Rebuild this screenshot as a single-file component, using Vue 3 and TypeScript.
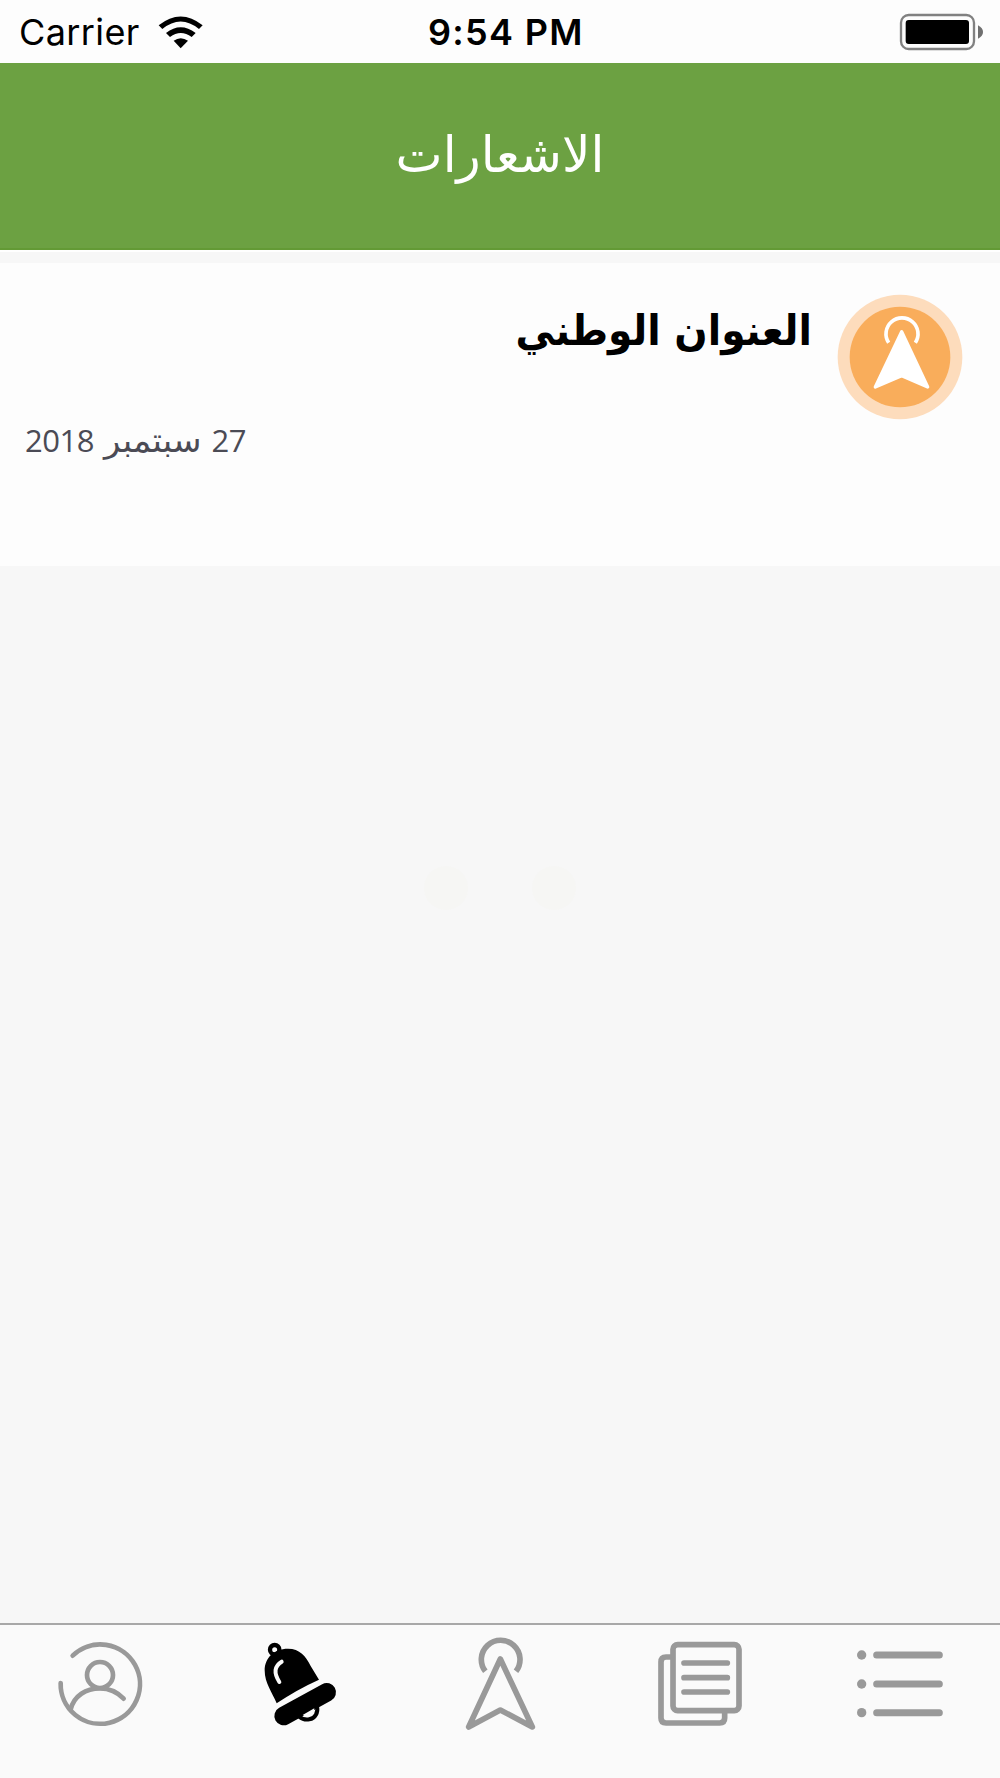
<script setup lang="ts">
const time = '9:54 PM'
const pageTitle = 'الاشعارات'
const notification = { title: 'العنوان الوطني', day: '27', month: 'سبتمبر', year: '2018' }
</script>

<template>
  <div class="screen">
    <div class="status">
      <div class="side">
        <span class="carrier">Carrier</span>
        <svg class="wifi" viewBox="471 42 136 102" width="45.33" height="34">
          <path d="M473 73Q539 20 605 73L594 84Q539 39 484 84Z" />
          <path d="M495 96Q539 62 584 96L572 108Q539 84 507 108Z" />
          <path d="M518 119Q539 104 561 119L539 142Z" />
        </svg>
      </div>
      <span class="time">{{ time }}</span>
      <div class="side end">
        <svg viewBox="117 39 255 114" width="85" height="38">
          <rect x="123" y="45" width="219" height="102" rx="23" fill="none" stroke="#818181" stroke-width="7" />
          <rect x="137" y="60" width="190" height="72" rx="9" />
          <path d="M354 76Q369 84 369 96T354 116Z" fill="#707070" />
        </svg>
      </div>
    </div>

    <header class="header">
      <h1 dir="rtl">{{ pageTitle }}</h1>
    </header>

    <article class="card" dir="rtl">
      <div class="row">
        <svg class="badge" viewBox="1011 41 378 378" width="126" height="126">
          <circle cx="1200" cy="230" r="187" fill="#fddcbc" />
          <circle cx="1200" cy="230" r="151" fill="#f9ad5b" />
          <path d="M1166 187A48 48 0 1 1 1246 187" fill="none" stroke="#fff" stroke-width="11" />
          <path d="M1205 154L1283 320L1205 286L1126 320Z" fill="#fff" stroke="#fff" stroke-width="10" stroke-linejoin="round" />
        </svg>
        <h2>{{ notification.title }}</h2>
      </div>
      <div class="date">
        <span>{{ notification.day }}</span>
        <span class="month">{{ notification.month }}</span>
        <span>{{ notification.year }}</span>
      </div>
    </article>

    <main class="empty">
      <i class="dot"></i>
      <i class="dot"></i>
    </main>

    <nav class="tabs">
      <a class="tab">
        <svg viewBox="30 45 360 360">
          <g class="line thin" stroke-linecap="round">
            <path d="M128 137A119 119 0 1 1 92 219" />
            <circle cx="210" cy="195" r="39" />
            <path d="M122 298C132 257 168 235 210 235C239 235 263 247 281 266" />
          </g>
        </svg>
      </a>
      <a class="tab">
        <svg viewBox="30 45 360 360">
          <circle cx="134" cy="119" r="14" fill="none" stroke="#000" stroke-width="13" />
          <path d="M140 280C127 248 104 220 104 181C104 145 131 116 174 116C209 116 228 139 242 168L267 209Q202 238 140 280Z" />
          <path d="M155 155Q122 175 148 216" fill="none" stroke="#fafafa" stroke-width="12" stroke-linecap="round" />
          <path d="M161 318L290 247" stroke="#000" stroke-width="56" stroke-linecap="round" />
          <path d="M208 320Q221 331 238 328C256 325 265 307 261 289" fill="none" stroke="#000" stroke-width="12" />
          <path d="M218 315L253 295Q251 315 236 318Q226 320 218 315Z" fill="#fafafa" />
        </svg>
      </a>
      <a class="tab">
        <svg viewBox="30 45 360 360">
          <g class="line">
            <path d="M166 184A58 58 0 1 1 258 184" />
            <path d="M211 147L307 351L211 300L116 351Z" stroke-linejoin="round" />
          </g>
        </svg>
      </a>
      <a class="tab">
        <svg viewBox="30 45 360 360">
          <g class="line">
            <path d="M128 141H108Q93 141 93 156V324Q93 339 108 339H269Q284 339 284 324V304" />
            <rect x="129" y="104" width="198" height="198" rx="14" />
            <path d="M162 159H292M162 203H292M162 246H292" stroke-linecap="round" />
          </g>
        </svg>
      </a>
      <a class="tab">
        <svg viewBox="30 45 360 360">
          <g fill="#999">
            <circle cx="95" cy="135" r="14" />
            <circle cx="95" cy="222" r="14" />
            <circle cx="95" cy="308" r="14" />
          </g>
          <path class="line bars" d="M140 135H328M140 222H328M140 308H328" stroke-linecap="round" />
        </svg>
      </a>
    </nav>
  </div>
</template>

<style>
body { margin: 0; background: #f7f7f7; }
</style>

<style scoped>
.screen {
  display: flex;
  flex-direction: column;
  width: 1000px;
  height: 1778px;
  overflow: hidden;
  background: #f7f7f7;
  font-family: Inter, "Liberation Sans", sans-serif;
  color: #000;
}
.status {
  display: flex;
  flex: 0 0 63px;
  min-height: 0;
  background: #fdfdfd;
}
.side {
  display: flex;
  align-items: center;
  box-sizing: border-box;
  flex: 0 0 428px;
  padding: 1px 0 0 19px;
}
.end {
  flex: 1;
  justify-content: flex-end;
  padding: 1px 16px 0 0;
}
.carrier { font-size: 36px; line-height: 60px; letter-spacing: 0.4px; }
.wifi { margin-left: 18px; }
.time {
  height: 63px;
  font-size: 36px;
  line-height: 65px;
  font-weight: 570;
  letter-spacing: 1.3px;
}
.header {
  display: flex;
  flex: 0 0 187px;
  justify-content: center;
  background: #6ca142;
  border-bottom: 2px solid #fff;
  box-shadow: inset 0 -2px #639a35;
}
h1 {
  margin: 60px 0 0;
  font: 400 50px/64px "DejaVu Sans", sans-serif;
  color: #fff;
}
.card {
  flex: 0 0 303px;
  margin-top: 11px;
  background: #fdfdfd;
}
.row { display: flex; padding: 31px 37px 0; }
h2 {
  margin: 10px 25px 0 0;
  font: 700 42px/54px "DejaVu Sans", sans-serif;
  transform: scaleX(0.932);
  transform-origin: right;
}
.date {
  display: flex;
  justify-content: flex-end;
  align-items: baseline;
  gap: 10px;
  padding-left: 25px;
  font: 400 31px/40px "Open Sans", "DejaVu Sans", sans-serif;
  letter-spacing: -0.5px;
  color: #4b4b55;
}
.month { font-family: "DejaVu Sans", sans-serif; font-size: 34px; letter-spacing: 0; }
.empty {
  display: flex;
  flex: 1;
  justify-content: center;
  gap: 64px;
  padding-top: 300px;
}
.dot { width: 44px; height: 44px; border-radius: 50%; background: #f6f6f4; }
.tabs {
  display: flex;
  flex: 0 0 153px;
  border-top: 2px solid #a8a8a8;
  background: #fafafa;
}
.tab { display: flex; flex: 1; justify-content: center; }
.tab svg { width: 120px; height: 120px; }
.line { fill: none; stroke: #999; stroke-width: 17; }
.thin { stroke-width: 14; }
.bars { stroke-width: 21; }
</style>
